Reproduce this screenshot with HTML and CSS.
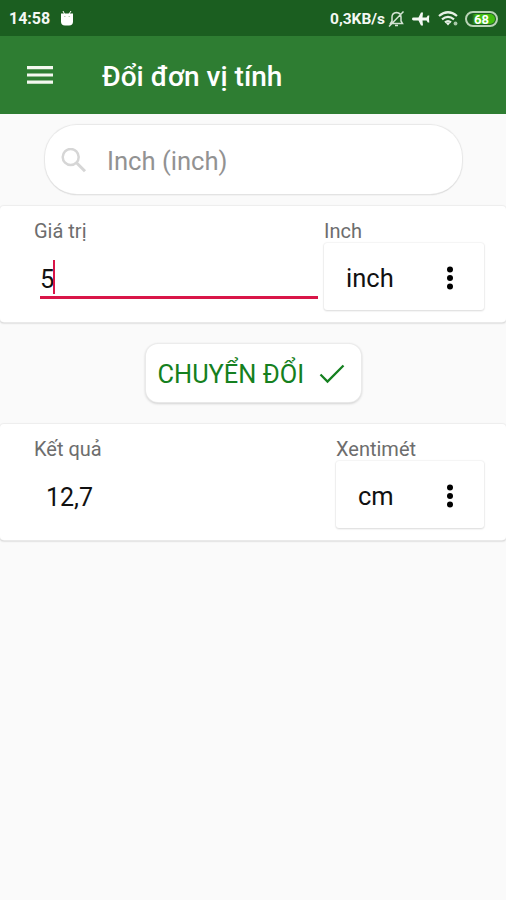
FILE: index.html
```html
<!DOCTYPE html>
<html lang="vi">
<head>
<meta charset="utf-8">
<title>Đổi đơn vị tính</title>
<link rel="stylesheet" href="styles.css">
</head>
<body>
<div class="status">
  <span class="time">14:58</span>
  <svg class="robot" width="14" height="18" viewBox="0 0 14 18"><path d="M3 1l2 4M11 1L9 4" stroke="#fff" stroke-width="1"/><path d="M1 3.500h12v8q0 4-4 4h-4Q1 15.500 1 11.500z" fill="#fff"/><path d="M4 6.500h1.500M8.500 6.500H10" stroke="#b8ceb8" stroke-width="1"/></svg>
  <span class="speed">0,3KB/s</span>
  <svg class="bell" width="17" height="18" viewBox="0 0 17 18" fill="none" stroke="#d3e2d3" stroke-width="1.500"><path d="M2.500 13.500h12L13 11V7q0-4-4.500-4.500Q4 3 4 7v4zM7 15.500h3M15.500 1.500L1 16.500"/></svg>
  <svg class="plane" width="18" height="16" viewBox="0 0 18 16" fill="#f4f8f4"><path d="M0 8q0-1.400 1.500-1.400h5L9 1.500h2L10.500 6.600h4L15.800 4.500h1.500L17 8l.3 3.500h-1.500l-1.300-2.100h-4l.5 5.100H9L6.500 9.400h-5Q0 9.400 0 8z"/></svg>
  <svg class="wifi" width="21" height="17" viewBox="0 0 21 17" fill="none" stroke="#e6f0e6" stroke-width="2.200"><path d="M1 6q9-7.500 18 0M4 9.300q6-5 12 0M7 12.300q3-2.500 6 0"/><path d="M7.500 12.500h5L10 15.500z" fill="#f0f6f0" stroke="none"/><circle cx="17.500" cy="13.500" r="1.900" fill="#a9c8a9" stroke="none"/></svg>
  <span class="battery"><span class="level">68</span></span>
</div>
<header class="appbar">
  <svg class="menu" width="26" height="20" viewBox="0 0 26 20" fill="#f4f8f0"><path d="M0 1h26v3.200H0zM0 8.400h26v3.200H0zM0 15.600h26v3.200H0z"/></svg>
  <h1>Đổi đơn vị tính</h1>
</header>
<main>
  <div class="search">
    <svg width="26" height="26" viewBox="0 0 26 26" fill="none" stroke="#d6d6d6" stroke-width="2.500"><circle cx="9.700" cy="9" r="8"/><path d="M15.500 14.800l8.500 8.500" stroke-width="3"/></svg>
    <span>Inch (inch)</span>
  </div>
  <section class="card">
    <div class="value">
      <label>Giá trị</label>
      <div class="field"><span>5</span><i class="caret"></i></div>
    </div>
    <div class="unit unit-wide">
      <label>Inch</label>
      <div class="picker"><span>inch</span><svg width="8" height="24" viewBox="0 0 8 24"><circle cx="4" cy="3.500" r="3"/><circle cx="4" cy="12" r="3"/><circle cx="4" cy="20.500" r="3"/></svg></div>
    </div>
  </section>
  <div class="convert">
    <span>CHUYỂN ĐỔI</span>
    <svg width="26" height="20" viewBox="0 0 26 20" fill="none" stroke="#158020" stroke-width="2.300"><path d="M1.500 10.500l7 7L24.500 1.500"/></svg>
  </div>
  <section class="card">
    <div class="value">
      <label>Kết quả</label>
      <div class="result">12,7</div>
    </div>
    <div class="unit">
      <label>Xentimét</label>
      <div class="picker"><span>cm</span><svg width="8" height="24" viewBox="0 0 8 24"><circle cx="4" cy="3.500" r="3"/><circle cx="4" cy="12" r="3"/><circle cx="4" cy="20.500" r="3"/></svg></div>
    </div>
  </section>
</main>
</body>
</html>
```
FILE: styles.css
```css
* { box-sizing: border-box; }
body {
  margin: 0;
  min-height: 900px;
  background: #fafafa;
  color: #111;
  font-family: Roboto, "Noto Sans", sans-serif;
}
svg { display: block; flex: none; }
.status {
  display: flex;
  align-items: center;
  height: 36px;
  padding: 1px 8px 0 9px;
  background: #1b5e20;
  color: #f4f8f4;
  font-size: 16px;
  font-weight: 700;
  white-space: nowrap;
}
.time { width: 51px; }
.speed { margin-left: auto; width: 58px; font-size: 15.500px; }
.plane { margin-left: 7px; }
.wifi { margin-left: 8px; }
.battery {
  width: 33px;
  height: 16px;
  margin-left: 6px;
  padding: 1px;
  border: 2px solid #b9d3b6;
  border-radius: 8px;
}
.level {
  display: block;
  height: 10px;
  border-radius: 5px;
  background: linear-gradient(90deg, #1b5e20 15%, #43bd10 30%);
  color: #fff;
  font-size: 13px;
  line-height: 11px;
  text-align: center;
}
.appbar {
  display: flex;
  align-items: center;
  height: 78px;
  padding: 0 27px;
  gap: 49px;
  background: #2e7d32;
  color: #fff;
}
h1 { margin: 4px 0 0; font-size: 28px; font-weight: 500; line-height: 36px; white-space: nowrap; }
main { display: flex; flex-direction: column; padding-top: 11px; }
.search {
  display: flex;
  align-items: center;
  width: 417px;
  height: 69px;
  margin-left: 45px;
  padding: 3px 16px 0;
  gap: 20px;
  border-radius: 32px;
  background: #fff;
  box-shadow: 0 0 1px 1px #e7e7e7, 0 1px 1px #bbb;
  color: #929292;
  font-size: 25.600px;
}
.card {
  display: flex;
  justify-content: space-between;
  height: 116px;
  padding: 13px 22px 0 34px;
  border-radius: 4px;
  background: #fff;
  box-shadow: 0 0 1px 1px #eee, 0 1px 2px #aaa;
}
.search + .card { margin-top: 12px; }
label { display: block; height: 24px; color: #6d6d6d; font-size: 20px; line-height: 24px; }
.value { width: 284px; }
.field {
  display: flex;
  align-items: center;
  width: 278px;
  height: 56px;
  margin-left: 6px;
  padding-top: 18px;
  border-bottom: 3px solid #d91548;
  font-size: 25.500px;
}
.caret { width: 2px; height: 34px; margin: 0 0 4px -1px; background: #d91548; }
.result { margin: 17px 0 0 12px; font-size: 25px; line-height: 40px; }
.unit { width: 148px; }
.unit-wide { width: 160px; }
.picker {
  display: flex;
  align-items: center;
  justify-content: space-between;
  height: 67px;
  padding: 2px 30px 0 22px;
  border-radius: 3px;
  background: #fff;
  box-shadow: 0 0 2px #ddd, 0 1px 2px #ddd;
  font-size: 25.500px;
}
.convert {
  display: flex;
  align-items: center;
  align-self: center;
  justify-content: space-between;
  width: 215px;
  height: 58px;
  margin: 22px 0;
  padding: 2px 16px 0 12px;
  border-radius: 12px;
  background: #fff;
  box-shadow: 0 0 1px 1px #ebebeb, 0 1px 3px #aaa;
  color: #158020;
  font-size: 25.400px;
  white-space: nowrap;
}
```
